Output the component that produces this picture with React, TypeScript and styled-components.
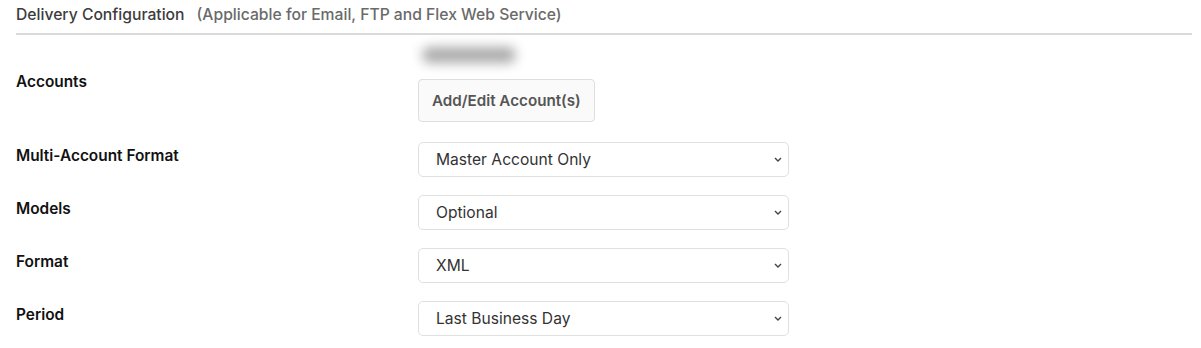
import { createGlobalStyle, styled } from "styled-components";

const GlobalStyle = createGlobalStyle`
  body {
    margin: 0;
    background: #fff;
    font-family: "Inter", "Liberation Sans", sans-serif;
  }
`;

const Page = styled.div`
  padding: 0 9px 0 16px;
`;

const Header = styled.div`
  display: flex;
  align-items: baseline;
  gap: 12px;
  padding: 5px 0 8px;
  border-bottom: 2px solid #dadada;
  line-height: 20px;
`;

const Title = styled.span`
  font-size: 15.7px;
  font-weight: 500;
  color: #3c3c3c;
`;

const Subtitle = styled.span`
  font-size: 15.7px;
  font-weight: 500;
  color: #6a6a6a;
`;

const Form = styled.div`
  display: flex;
  flex-direction: column;
  gap: 18px;
  padding-top: 5px;
`;

const Row = styled.div`
  display: flex;
  align-items: center;
`;

const Label = styled.div<{ $shift?: number }>`
  width: 402px;
  flex-shrink: 0;
  font-size: 15.4px;
  font-weight: 600;
  color: #111;
  padding-bottom: ${(p) => p.$shift ?? 0}px;
`;

const AccountsBox = styled.div`
  display: flex;
  flex-direction: column;
  align-items: flex-start;
  gap: 9px;
  margin-bottom: 2px;
`;

const Blurred = styled.div`
  width: 94px;
  height: 16px;
  margin: 7px 0 7px 4px;
  border-radius: 8px;
  background: #aaaaaa;
  filter: blur(6px);
`;

const Button = styled.button`
  height: 43px;
  padding: 0 13px;
  border: 1px solid #dedede;
  border-radius: 4px;
  background: #fafafa;
  font-family: inherit;
  font-size: 15.2px;
  font-weight: 600;
  color: #555;
`;

const SelectWrap = styled.div`
  position: relative;
  width: 371px;
  height: 35px;
`;

const Select = styled.select`
  appearance: none;
  width: 100%;
  height: 100%;
  padding: 0 30px 0 17px;
  border: 1px solid #e0e0e0;
  border-radius: 5px;
  background: #fff;
  font-family: inherit;
  font-size: 15.6px;
  font-weight: 400;
  color: #333;
  outline: none;
`;

const Chevron = styled.svg`
  position: absolute;
  right: 7px;
  top: 15px;
  pointer-events: none;
`;

const fields = [
  { label: "Multi-Account Format", value: "Master Account Only" },
  { label: "Models", value: "Optional" },
  { label: "Format", value: "XML" },
  { label: "Period", value: "Last Business Day" },
];

export default function App() {
  return (
    <Page>
      <GlobalStyle />
      <Header>
        <Title>Delivery Configuration</Title>
        <Subtitle>(Applicable for Email, FTP and Flex Web Service)</Subtitle>
      </Header>
      <Form>
        <Row>
          <Label $shift={2}>Accounts</Label>
          <AccountsBox>
            <Blurred />
            <Button>Add/Edit Account(s)</Button>
          </AccountsBox>
        </Row>
        {fields.map((f) => (
          <Row key={f.label}>
            <Label $shift={8}>{f.label}</Label>
            <SelectWrap>
              <Select defaultValue={f.value}>
                <option>{f.value}</option>
              </Select>
              <Chevron width="8" height="5" viewBox="0 0 8 5">
                <path
                  d="M1 1l3 3 3-3"
                  fill="none"
                  stroke="#444"
                  strokeWidth="1.4"
                />
              </Chevron>
            </SelectWrap>
          </Row>
        ))}
      </Form>
    </Page>
  );
}
